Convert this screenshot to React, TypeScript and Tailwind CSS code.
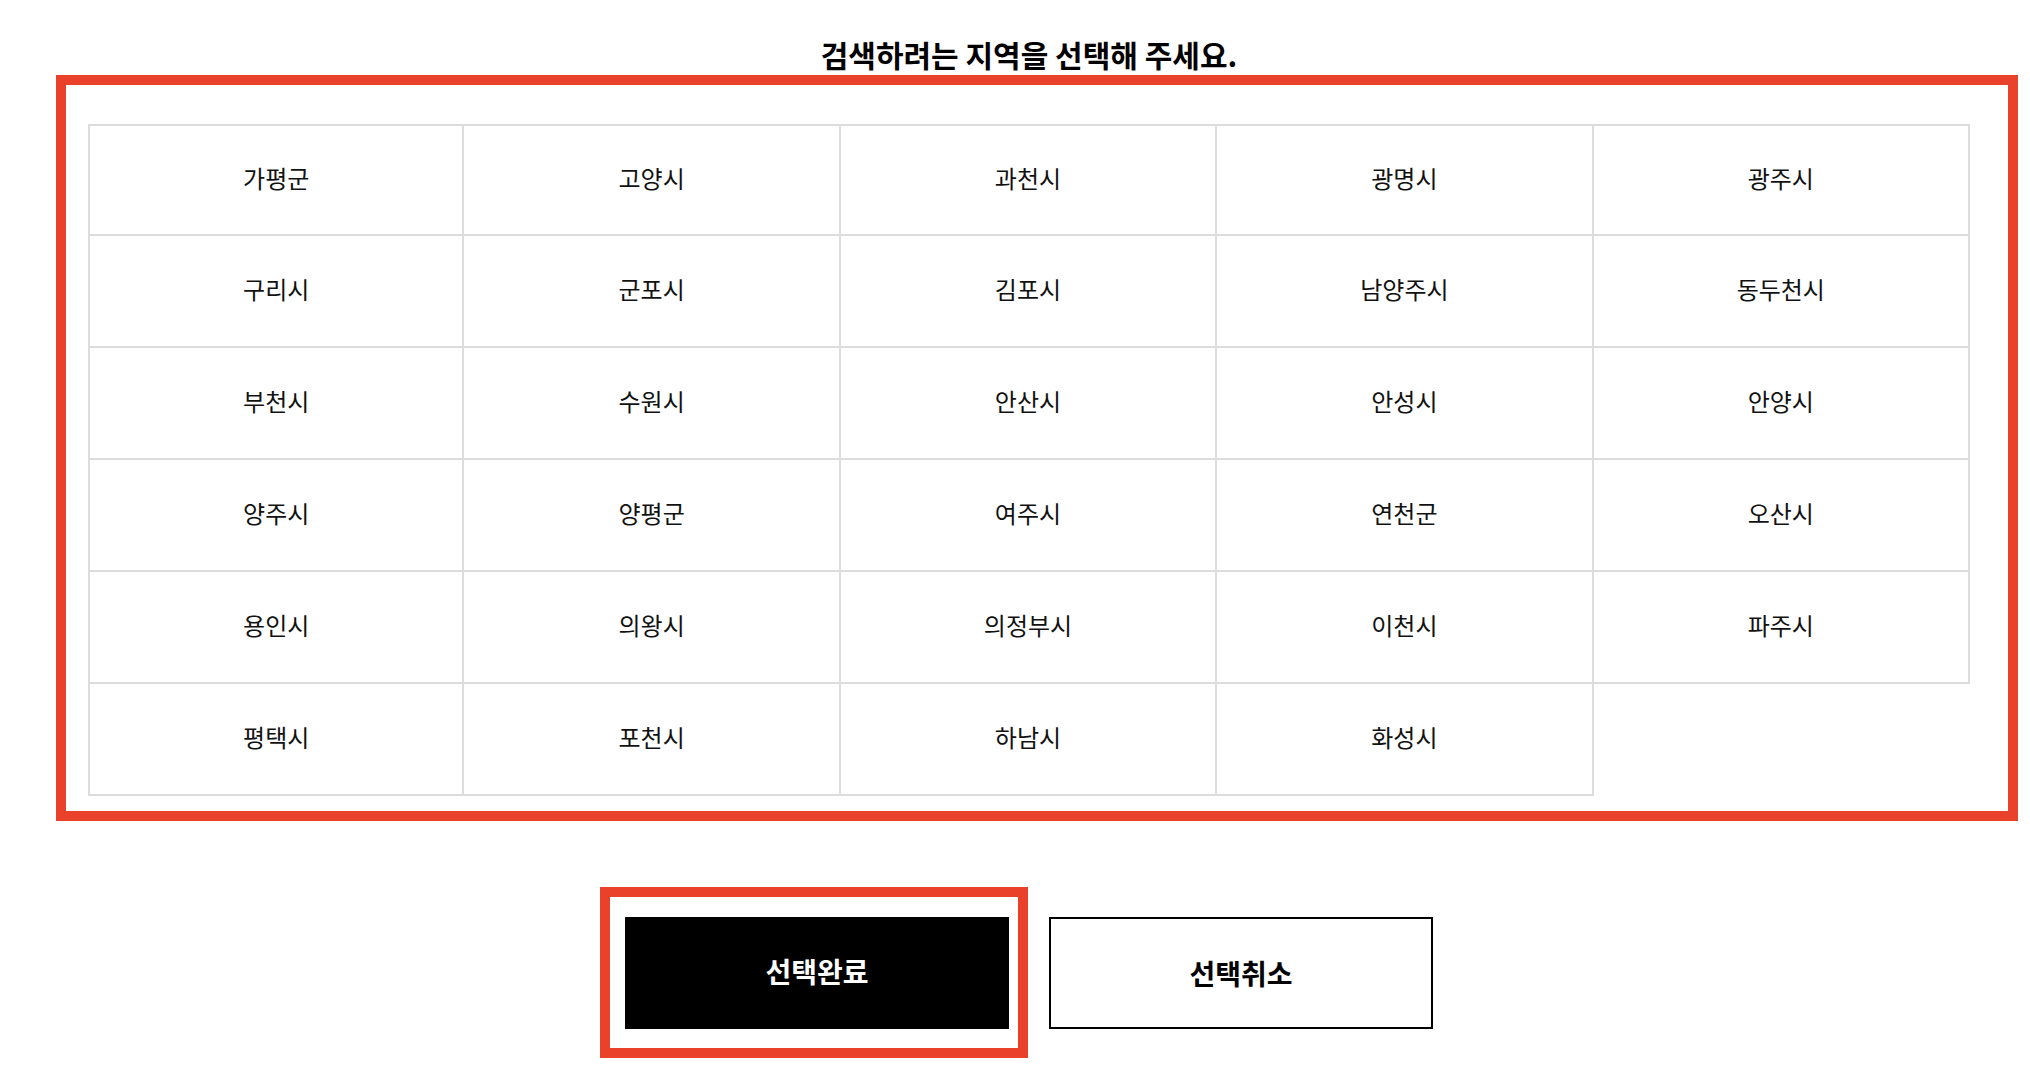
import React from 'react';

const regions: string[] = [
  '가평군', '고양시', '과천시', '광명시', '광주시',
  '구리시', '군포시', '김포시', '남양주시', '동두천시',
  '부천시', '수원시', '안산시', '안성시', '안양시',
  '양주시', '양평군', '여주시', '연천군', '오산시',
  '용인시', '의왕시', '의정부시', '이천시', '파주시',
  '평택시', '포천시', '하남시', '화성시',
];

const font = { fontFamily: '"Noto Sans CJK KR", "Noto Sans", sans-serif' };

const RegionCell: React.FC<{ name: string; index: number }> = ({ name, index }) => {
  // each cell draws its own right/bottom line, first row & column add top/left
  const top = index < 5 ? 'border-t-2' : '';
  const left = index % 5 === 0 ? 'border-l-2' : '';
  return (
    <div
      className={`flex h-[112px] items-center justify-center border-r-2 border-b-2 border-[#dcdcdc] pb-[4px] text-[24px] leading-[32px] text-[#111] ${top} ${left}`}
    >
      {name}
    </div>
  );
};

const App: React.FC = () => {
  return (
    <div className="h-[1068px] w-[2030px] overflow-hidden bg-white" style={font}>
      <h2 className="ml-[88px] w-[1882px] pt-[35px] text-center text-[30px] font-bold leading-[38px] text-black">
        검색하려는 지역을 선택해 주세요.
      </h2>

      <div className="ml-[56px] mt-[2px] w-[1962px] border-[10px] border-[#e9412a] pt-[39px] pb-[15px] pl-[22px] pr-[38px]">
        <div className="grid w-[1882px] grid-cols-5">
          {regions.map((r, i) => (
            <RegionCell key={r} name={r} index={i} />
          ))}
        </div>
      </div>

      <div className="ml-[600px] mt-[66px] flex items-start">
        <div className="border-[10px] border-[#e9412a] pt-[20px] pb-[19px] pl-[15px] pr-[9px]">
          <button className="flex h-[112px] w-[384px] items-center justify-center bg-black pb-[4px] text-[28px] font-bold text-white">
            선택완료
          </button>
        </div>
        <button className="ml-[21px] mt-[30px] flex h-[112px] w-[384px] items-center justify-center border-2 border-black bg-white text-[28px] font-bold text-black">
          선택취소
        </button>
      </div>
    </div>
  );
};

export default App;
